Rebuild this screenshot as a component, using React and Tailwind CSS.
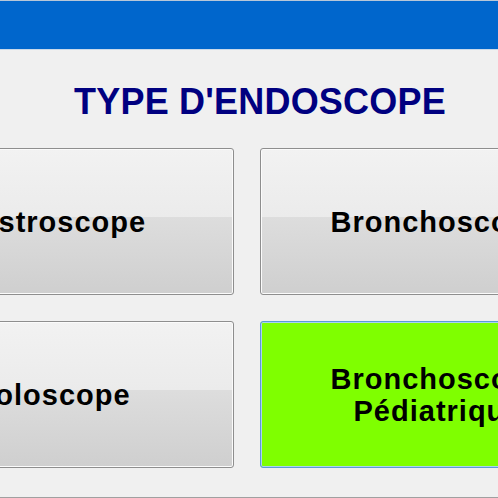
import React from "react";

const types = [
  { label: "Gastroscope" },
  { label: "Bronchoscope" },
  { label: "Coloscope" },
  { label: "Bronchoscope Pédiatrique", lines: ["Bronchoscope", "Pédiatrique"], selected: true },
];

function TypeButton({ item }) {
  const base =
    "h-[147px] rounded-[3px] flex flex-col items-center justify-center text-center text-[29px] leading-[32px] tracking-[1px] font-bold text-black";
  const look = item.selected
    ? "bg-[#7fff00] border border-[#5c9bd6] shadow-[inset_0_0_0_1px_#a9d2f3]"
    : "border border-[#8e8e8e] bg-[linear-gradient(to_bottom,#f2f2f2_0%,#ebebeb_47%,#dddddd_47%,#cfcfcf_100%)] shadow-[inset_0_0_0_1px_#fbfbfb]";

  return (
    <button className={`${base} ${look}`}>
      {item.lines ? item.lines.map((l) => <span key={l}>{l}</span>) : <span>{item.label}</span>}
    </button>
  );
}

export default function App() {
  return (
    <div
      className="w-[498px] h-[498px] overflow-hidden bg-[#f0f0f0] flex flex-col"
      style={{ fontFamily: '"Liberation Sans", Arial, sans-serif' }}
    >
      {/* Header bar */}
      <div className="h-[50px] shrink-0 bg-[#0066cc] border-t border-[#b7c7d8] border-b border-b-[#c9d9ea]" />

      {/* Title */}
      <h1 className="mt-[33px] pl-[22px] text-center text-[36px] leading-[37px] tracking-[0.2px] font-bold text-[#000080]">
        TYPE D'ENDOSCOPE
      </h1>

      {/* Endoscope types */}
      <div className="mt-[28px] -ml-[130px] w-[746px] shrink-0 grid grid-cols-[364px_356px] gap-[26px]">
        {types.map((t) => (
          <TypeButton key={t.label} item={t} />
        ))}
      </div>

      <div className="mt-[29px] h-px shrink-0 bg-[#a0a0a0]" />
    </div>
  );
}
